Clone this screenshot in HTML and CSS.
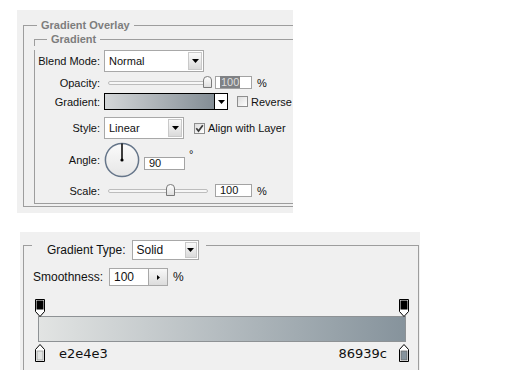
FILE: index.html
```html
<!DOCTYPE html>
<html>
<head>
<meta charset="utf-8">
<link rel="stylesheet" href="styles.css">
</head>
<body>
<div class="page">
  <section class="panel panel-top">
    <div class="grp">
      <div class="grp-head">
        <span class="notch notch-outer"></span>
        <span class="grp-title">Gradient Overlay</span>
        <span class="rule"></span>
      </div>
      <div class="grp-body grp-body-outer">
        <div class="grp grp-inner">
          <div class="grp-head">
            <span class="notch notch-inner"></span>
            <span class="grp-title">Gradient</span>
            <span class="rule"></span>
          </div>
          <div class="grp-body grp-body-inner">
            <div class="row row-blend">
              <span class="lbl">Blend Mode:</span>
              <div class="select select-blend">
                <span class="select-text">Normal</span>
                <span class="select-btn"><svg width="7" height="4" viewBox="0 0 7 4"><path d="M0 0H7L3.5 4Z" fill="#000"/></svg></span>
              </div>
            </div>
            <div class="row row-opacity">
              <span class="lbl">Opacity:</span>
              <div class="slider slider-opacity">
                <span class="track"></span>
                <span class="thumb" style="left:95px"><svg width="9" height="12" viewBox="0 0 9 12"><defs><linearGradient id="tg1" x1="0" y1="0" x2="0" y2="1"><stop offset="0" stop-color="#ffffff"/><stop offset="1" stop-color="#dedede"/></linearGradient></defs><path d="M0.5 11.5V4Q0.5 0.5 4.5 0.5Q8.5 0.5 8.5 4V11.5Z" fill="url(#tg1)" stroke="#7a7a7a"/></svg></span>
              </div>
              <span class="num"><span class="hl">100</span></span>
              <span class="unit">%</span>
            </div>
            <div class="row row-gradient">
              <span class="lbl">Gradient:</span>
              <div class="gbar">
                <span class="gbar-fill"></span>
                <span class="gbar-btn"><svg width="7" height="4" viewBox="0 0 7 4"><path d="M0 0H7L3.5 4Z" fill="#000"/></svg></span>
              </div>
              <span class="cb cb-reverse"></span>
              <span class="cb-text">Reverse</span>
            </div>
            <div class="row row-style">
              <span class="lbl">Style:</span>
              <div class="select select-style">
                <span class="select-text">Linear</span>
                <span class="select-btn"><svg width="7" height="4" viewBox="0 0 7 4"><path d="M0 0H7L3.5 4Z" fill="#000"/></svg></span>
              </div>
              <span class="cb cb-align"><svg width="9" height="9" viewBox="0 0 9 9"><path d="M1.3 4.3L3.5 7L7.8 1.2" fill="none" stroke="#3a3a3a" stroke-width="1.7"/></svg></span>
              <span class="cb-text">Align with Layer</span>
            </div>
            <div class="row row-angle">
              <span class="lbl lbl-angle">Angle:</span>
              <span class="dial"><svg width="36" height="36" viewBox="0 0 36 36"><defs><linearGradient id="dg" x1="0" y1="0" x2="0" y2="1"><stop offset="0" stop-color="#fbfbfb"/><stop offset="1" stop-color="#e6e6e6"/></linearGradient></defs><circle cx="18" cy="18" r="16.6" fill="url(#dg)" stroke="#66768a" stroke-width="1.5"/><path d="M18 18V1.5" stroke="#000" stroke-width="1.5"/><circle cx="18" cy="18" r="1.6" fill="#000"/></svg></span>
              <span class="num num-angle">90</span>
              <span class="deg">°</span>
            </div>
            <div class="row row-scale">
              <span class="lbl">Scale:</span>
              <div class="slider slider-scale">
                <span class="track"></span>
                <span class="thumb" style="left:58px"><svg width="9" height="12" viewBox="0 0 9 12"><defs><linearGradient id="tg2" x1="0" y1="0" x2="0" y2="1"><stop offset="0" stop-color="#ffffff"/><stop offset="1" stop-color="#dedede"/></linearGradient></defs><path d="M0.5 11.5V4Q0.5 0.5 4.5 0.5Q8.5 0.5 8.5 4V11.5Z" fill="url(#tg2)" stroke="#7a7a7a"/></svg></span>
              </div>
              <span class="num">100</span>
              <span class="unit">%</span>
            </div>
          </div>
        </div>
      </div>
    </div>
  </section>

  <section class="panel panel-bottom">
    <div class="grp2">
      <div class="grp2-head">
        <span class="notch2"></span>
        <span class="head-label">Gradient Type:</span>
        <div class="select select-type">
          <span class="select-text">Solid</span>
          <span class="select-btn"><svg width="7" height="4" viewBox="0 0 7 4"><path d="M0 0H7L3.5 4Z" fill="#000"/></svg></span>
        </div>
        <span class="rule2"></span>
      </div>
      <div class="grp2-body">
        <div class="row2 row-smooth">
          <span class="lbl2">Smoothness:</span>
          <span class="num2">100</span>
          <span class="step-btn"><svg width="3" height="5" viewBox="0 0 3 5"><path d="M0 0L3 2.5L0 5Z" fill="#000"/></svg></span>
          <span class="unit2">%</span>
        </div>
        <div class="stops">
          <div class="stops-row">
            <svg class="stop" width="10" height="18" viewBox="0 0 10 18"><path d="M0.5 0.5H9.5V12.5L5 17.5L0.5 12.5Z" fill="#fff" stroke="#000"/><rect x="1.5" y="1.5" width="7" height="9" fill="#000"/></svg>
            <svg class="stop" width="10" height="18" viewBox="0 0 10 18"><path d="M0.5 0.5H9.5V12.5L5 17.5L0.5 12.5Z" fill="#fff" stroke="#000"/><rect x="1.5" y="1.5" width="7" height="9" fill="#000"/></svg>
          </div>
          <div class="gbar2"></div>
          <div class="stops-row stops-bottom">
            <svg class="stop" width="10" height="18" viewBox="0 0 10 18"><path d="M5 0.5L9.5 5.5V17.5H0.5V5.5Z" fill="#fff" stroke="#000"/><rect x="2" y="7" width="6" height="9" fill="#e2e4e3" stroke="#9a9a9a" stroke-width="0.8"/></svg>
            <span class="hex hex-left">e2e4e3</span>
            <span class="spacer"></span>
            <span class="hex">86939c</span>
            <svg class="stop stop-right" width="10" height="18" viewBox="0 0 10 18"><path d="M5 0.5L9.5 5.5V17.5H0.5V5.5Z" fill="#fff" stroke="#000"/><rect x="2" y="7" width="6" height="9" fill="#86939c" stroke="#6a6a6a" stroke-width="0.8"/></svg>
          </div>
        </div>
      </div>
    </div>
  </section>
</div>
</body>
</html>
```

FILE: styles.css
```css
html, body {
  margin: 0;
  padding: 0;
  background: #ffffff;
}

.page {
  display: flex;
  flex-direction: column;
  align-items: flex-start;
}

.panel {
  background: #f0f0f0;
  box-sizing: border-box;
  font-family: "Liberation Sans", Arial, sans-serif;
  color: #111;
}

/* ---------- top panel ---------- */
.panel-top {
  margin: 10px 0 0 17px;
  width: 276px;
  padding: 8px 0 6px 0;
  font-size: 11px;
}

.grp {
  margin-left: 6px;
}

.grp-inner {
  margin-left: 10px;
}

.grp-head {
  display: flex;
  height: 14px;
  line-height: 14px;
}

.notch {
  box-sizing: border-box;
  margin-top: 7px;
  border-top: 1px solid #9d9d9d;
  border-left: 1px solid #9d9d9d;
  flex: none;
}

.notch-outer { width: 14px; }
.notch-inner { width: 13px; }

.grp-title {
  padding: 0 4px;
  font-weight: bold;
  color: #7d7d7d;
  white-space: nowrap;
}

.rule {
  flex: 1;
  margin-top: 7px;
  border-top: 1px solid #9d9d9d;
}

.grp-body {
  border-left: 1px solid #9d9d9d;
  border-bottom: 1px solid #9d9d9d;
}

.grp-body-outer {
  padding-bottom: 2px;
}

.grp-body-inner {
  padding-bottom: 6px;
}

.row {
  display: flex;
  align-items: center;
}

.row-blend { margin-top: 4px; height: 22px; }
.row-opacity { margin-top: 4px; height: 13px; }
.row-gradient { margin-top: 4px; height: 17px; }
.row-style { margin-top: 7px; height: 22px; }
.row-angle { margin-top: 4px; height: 35px; align-items: flex-start; }
.row-scale { margin-top: 6px; height: 13px; }

.lbl {
  width: 65px;
  margin-right: 4px;
  text-align: right;
  flex: none;
  white-space: nowrap;
}

.lbl-angle {
  margin-top: 11px;
  line-height: 13px;
}

.select {
  display: flex;
  box-sizing: border-box;
  background: #fff;
  border: 1px solid #a8a8a8;
  flex: none;
}

.select-blend { width: 100px; height: 22px; }
.select-style { width: 80px; height: 22px; }

.select-text {
  flex: 1;
  padding-left: 4px;
  display: flex;
  align-items: center;
}

.select-btn {
  width: 14px;
  margin: 1px;
  box-sizing: border-box;
  border: 1px solid #c9c9c9;
  background: linear-gradient(#fafafa, #dadada);
  display: flex;
  align-items: center;
  justify-content: center;
}

.slider {
  position: relative;
  height: 13px;
  display: flex;
  align-items: center;
  margin-left: 4px;
  flex: none;
}

.slider-opacity { width: 104px; margin-right: 3px; }
.slider-scale { width: 100px; margin-right: 7px; }

.track {
  flex: 1;
  height: 4px;
  box-sizing: border-box;
  border: 1px solid #bdbdbd;
  border-radius: 3px;
  background: #f7f7f7;
}

.thumb {
  position: absolute;
  top: 0;
  width: 9px;
  height: 12px;
  display: block;
}

.thumb svg { display: block; }

.num {
  box-sizing: border-box;
  width: 37px;
  height: 13px;
  border: 1px solid #a3a3a3;
  background: #fff;
  padding-left: 4px;
  line-height: 11px;
  font-size: 11px;
  flex: none;
}

.hl {
  background: #7f8184;
  color: #dedede;
  padding: 0 1px;
}

.unit {
  margin-left: 5px;
}

.gbar {
  display: flex;
  box-sizing: border-box;
  width: 124px;
  height: 17px;
  border: 1px solid #000;
  flex: none;
}

.gbar-fill {
  flex: 1;
  background: linear-gradient(to right, #d3d6d8, #838d95);
}

.gbar-btn {
  width: 12px;
  border-left: 1px solid #000;
  background: #fff;
  display: flex;
  align-items: center;
  justify-content: center;
}

.cb {
  box-sizing: border-box;
  width: 11px;
  height: 11px;
  border: 1px solid #8e8e8e;
  background: linear-gradient(135deg, #dcdcdc, #ffffff);
  display: flex;
  align-items: center;
  justify-content: center;
  flex: none;
}

.cb-reverse { margin-left: 9px; }
.cb-align { margin-left: 10px; }

.cb-text {
  margin-left: 3px;
  white-space: nowrap;
}

.dial {
  width: 36px;
  height: 36px;
  margin-top: -1px;
  flex: none;
}

.dial svg { display: block; }

.num-angle {
  width: 41px;
  margin-left: 4px;
  margin-top: 14px;
}

.deg {
  margin-left: 4px;
  margin-top: 5px;
  line-height: 13px;
}

/* ---------- bottom panel ---------- */
.panel-bottom {
  margin: 19px 0 0 20px;
  width: 400px;
  height: 138px;
  padding-top: 8px;
  overflow: hidden;
  font-size: 12px;
}

.grp2 {
  margin-left: 3px;
  margin-right: 1px;
  display: flex;
  flex-direction: column;
  height: 200px;
}

.grp2-head {
  display: flex;
  align-items: center;
  height: 20px;
}

.notch2 {
  align-self: stretch;
  box-sizing: border-box;
  width: 9px;
  margin-top: 5px;
  border-top: 1px solid #9d9d9d;
  border-left: 1px solid #9d9d9d;
  flex: none;
}

.head-label {
  margin-left: 15px;
  white-space: nowrap;
}

.select-type {
  width: 67px;
  height: 20px;
  margin-left: 6px;
}

.select-type .select-text {
  padding-left: 4px;
}

.select-type .select-btn {
  width: 12px;
}

.rule2 {
  flex: 1;
  align-self: stretch;
  margin-top: 5px;
  margin-left: 7px;
  border-top: 1px solid #9d9d9d;
  border-right: 1px solid #9d9d9d;
}

.grp2-body {
  flex: 1;
  border-left: 1px solid #9d9d9d;
  border-right: 1px solid #9d9d9d;
}

.row2 {
  display: flex;
  align-items: center;
}

.row-smooth {
  margin-top: 8px;
  margin-left: 9px;
  height: 18px;
}

.lbl2 {
  width: 76px;
  flex: none;
}

.num2 {
  box-sizing: border-box;
  width: 39px;
  height: 18px;
  border: 1px solid #a8a8a8;
  border-right: none;
  background: #fff;
  padding-left: 4px;
  line-height: 16px;
}

.step-btn {
  box-sizing: border-box;
  width: 20px;
  height: 18px;
  border: 1px solid #a8a8a8;
  background: linear-gradient(#f8f8f8, #dcdcdc);
  display: flex;
  align-items: center;
  justify-content: center;
}

.unit2 {
  margin-left: 5px;
}

.stops {
  margin: 13px 9px 0 11px;
}

.stops-row {
  display: flex;
  justify-content: space-between;
  height: 18px;
}

.stop {
  display: block;
  flex: none;
}

.gbar2 {
  margin: -1px 3px 0 3px;
  height: 26px;
  box-sizing: border-box;
  border: 1px solid #8e9295;
  background: linear-gradient(to right, #e2e4e3, #86939c);
}

.stops-bottom {
  margin-top: 2px;
  align-items: center;
  justify-content: flex-start;
}

.hex {
  font-family: "DejaVu Sans", sans-serif;
  font-size: 13px;
  color: #111;
  line-height: 18px;
  padding-top: 2px;
}

.hex-left {
  margin-left: 14px;
}

.spacer {
  flex: 1;
}

.stop-right {
  margin-left: 12px;
}
```
